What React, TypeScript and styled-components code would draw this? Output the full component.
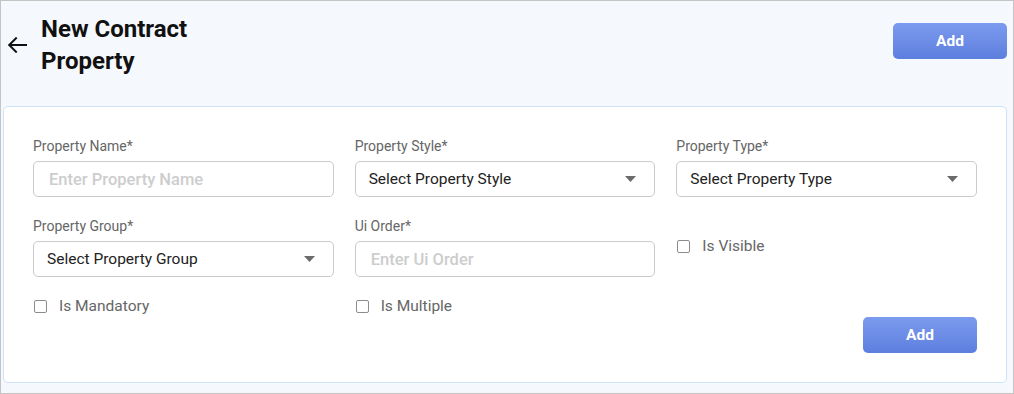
import React from "react";
import styled, { createGlobalStyle } from "styled-components";

const GlobalStyle = createGlobalStyle`
  html, body {
    margin: 0;
    padding: 0;
    font-family: Roboto, "Liberation Sans", sans-serif;
  }
  * {
    box-sizing: border-box;
  }
`;

type Field = {
  label: string;
  kind: "input" | "select";
  text: string;
};

const firstRow: Field[] = [
  { label: "Property Name*", kind: "input", text: "Enter Property Name" },
  { label: "Property Style*", kind: "select", text: "Select Property Style" },
  { label: "Property Type*", kind: "select", text: "Select Property Type" },
];

const secondRow: Field[] = [
  { label: "Property Group*", kind: "select", text: "Select Property Group" },
  { label: "Ui Order*", kind: "input", text: "Enter Ui Order" },
];

const BackArrow = () => (
  <svg width="20" height="16" viewBox="0 0 20 16" fill="none">
    <path
      d="M19 8H2.5M9 1.2L2.2 8L9 14.8"
      stroke="#111"
      strokeWidth="2"
      strokeLinecap="square"
    />
  </svg>
);

const Caret = () => (
  <svg width="11" height="6" viewBox="0 0 11 6">
    <path d="M0 0h11L5.5 6z" fill="#6b6b6b" />
  </svg>
);

const FieldBlock = ({ field }: { field: Field }) => (
  <FieldGroup>
    <Label>{field.label}</Label>
    {field.kind === "input" ? (
      <TextInput placeholder={field.text} />
    ) : (
      <SelectBox>
        <span>{field.text}</span>
        <Caret />
      </SelectBox>
    )}
  </FieldGroup>
);

const Check = ({ label, centered }: { label: string; centered?: boolean }) => (
  <CheckRow $centered={centered}>
    <Box />
    <CheckText>{label}</CheckText>
  </CheckRow>
);

const App = () => {
  return (
    <>
      <GlobalStyle />
      <Page>
        <Header>
          <TitleGroup>
            <BackArrow />
            <Title>New Contract Property</Title>
          </TitleGroup>
          <AddButton $top={10}>Add</AddButton>
        </Header>

        <Card>
          <FormGrid>
            {firstRow.map((f) => (
              <FieldBlock key={f.label} field={f} />
            ))}
            {secondRow.map((f) => (
              <FieldBlock key={f.label} field={f} />
            ))}
            <Check label="Is Visible" centered />
            <Check label="Is Mandatory" />
            <Check label="Is Multiple" />
          </FormGrid>
          <Footer>
            <AddButton>Add</AddButton>
          </Footer>
        </Card>
      </Page>
    </>
  );
};

const Page = styled.div`
  width: 1014px;
  height: 394px;
  border: 1px solid #c4c4c4;
  background: #f5f8fd;
  padding: 0 6px 0 2px;
  display: flex;
  flex-direction: column;
`;

const Header = styled.div`
  height: 105px;
  display: flex;
  justify-content: space-between;
  align-items: flex-start;
  padding: 12px 0 0 4px;
`;

const TitleGroup = styled.div`
  display: flex;
  align-items: center;
  gap: 14px;
`;

const Title = styled.h1`
  margin: 0;
  width: 180px;
  font-size: 24px;
  line-height: 32px;
  font-weight: 700;
  color: #111;
`;

const AddButton = styled.button<{ $top?: number }>`
  width: 114px;
  height: 36px;
  margin-top: ${(p) => p.$top ?? 0}px;
  border: none;
  border-radius: 5px;
  background: linear-gradient(180deg, #7b9bef 0%, #5e7ede 100%);
  color: #fff;
  font-family: Roboto, "Liberation Sans", sans-serif;
  font-size: 15.5px;
  font-weight: 700;
  cursor: pointer;
`;

const Card = styled.div`
  height: 277px;
  background: #fff;
  border: 1px solid #cde4f6;
  border-radius: 5px;
  padding: 31px 29px 0 29px;
`;

const FormGrid = styled.div`
  display: grid;
  grid-template-columns: repeat(3, 1fr);
  column-gap: 21px;
  row-gap: 21px;
`;

const FieldGroup = styled.div`
  display: flex;
  flex-direction: column;
  gap: 6px;
`;

const Label = styled.label`
  font-size: 14px;
  line-height: 17px;
  color: #666;
`;

const TextInput = styled.input`
  height: 36px;
  border: 1px solid #cacaca;
  border-radius: 5px;
  padding: 0 15px;
  font-family: Roboto, "Liberation Sans", sans-serif;
  font-size: 16.5px;
  font-weight: 500;
  outline: none;
  &::placeholder {
    color: #cdcdcd;
  }
`;

const SelectBox = styled.div`
  height: 36px;
  border: 1px solid #cacaca;
  border-radius: 5px;
  padding: 0 18px 0 13px;
  display: flex;
  align-items: center;
  justify-content: space-between;
  font-size: 15.5px;
  color: #222;
`;

const CheckRow = styled.div<{ $centered?: boolean }>`
  display: flex;
  align-items: center;
  gap: 12px;
  height: 16px;
  padding-left: 1px;
  align-self: ${(p) => (p.$centered ? "center" : "start")};
  margin-bottom: ${(p) => (p.$centered ? "3px" : "0")};
`;

const Box = styled.span`
  width: 13px;
  height: 13px;
  border: 1.5px solid #8c8c8c;
  border-radius: 2px;
  background: #fff;
`;

const CheckText = styled.span`
  font-size: 15.5px;
  color: #666;
`;

const Footer = styled.div`
  display: flex;
  justify-content: flex-end;
  margin-top: 3px;
`;

export default App;
